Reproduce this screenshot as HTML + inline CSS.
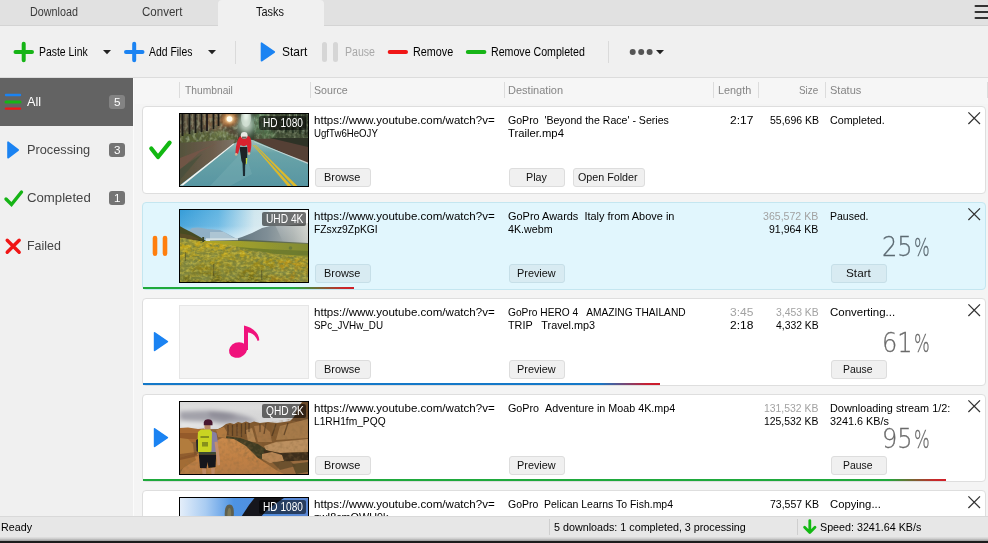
<!DOCTYPE html>
<html><head><meta charset="utf-8"><title>Tasks</title>
<style>
*{box-sizing:border-box;margin:0;padding:0}
html,body{width:988px;height:543px;overflow:hidden;background:#f0f0f0;font-family:"Liberation Sans",sans-serif;font-size:11.5px;color:#000}
.abs{position:absolute}
.t{position:absolute;white-space:pre;transform-origin:0 0;color:#000}
#tabs{left:0;top:0;width:988px;height:26px;background:#e1e1e1;border-bottom:1px solid #d4d4d4}
#tabact{left:218px;top:0;width:106px;height:26px;background:#f0f0f0;border-radius:4px 4px 0 0}
#toolbar{left:0;top:26px;width:988px;height:52px;background:#f0f0f0;border-bottom:1px solid #dcdcdc}
.sep{position:absolute;width:1px;background:#dadada}
#side{left:0;top:78px;width:133px;height:438px;background:#f0f0f0}
.bd{position:absolute;left:109px;width:16px;height:14px;border-radius:3px;background:#747474}
#main{left:133px;top:78px;width:855px;height:438px;background:#f4f4f4;border-left:1.5px solid #fbfbfb}
#hdr{left:135px;top:78px;width:853px;height:26px;background:#f6f6f6}
.card{position:absolute;left:142px;width:844px;height:88px;background:#fff;border:1px solid #dedede;border-radius:4px;overflow:hidden}
.card.sel{background:#e1f6fd;border-color:#c4e6f0}
.btn{position:absolute;height:19px;border:1px solid #dddddd;border-radius:3px;background:#f0f0f0}
.btn.s{background:#d8ebf2;border-color:#c6dfe8}
.th{position:absolute;left:179px;width:130px;height:74px;border:1px solid #000;overflow:hidden;background:#888}
.th svg{position:absolute;left:0;top:0;display:block}
.q{position:absolute;height:14px;border-radius:2px;background:rgba(0,0,0,.55)}
.pb{position:absolute;left:143px;height:2.5px}
#status{left:0;top:516px;width:988px;height:22px;background:#e7e7e7;border-top:1px solid #d9d9d9}
#bot1{left:0;top:537px;width:988px;height:4px;background:linear-gradient(#e2e2e2,#cfcfcf 40%,#9a9a9a)}
#bot2{left:0;top:540.5px;width:988px;height:3px;background:#1c1c1c}
</style></head><body>
<div id="tabs" class="abs"></div><div id="tabact" class="abs"></div>
<div class="t" style="left:30.00px;top:5.14px;font-size:12px;line-height:14px;transform:scaleX(0.8974);color:#3a3a3a;">Download</div><div class="t" style="left:142.00px;top:5.14px;font-size:12px;line-height:14px;transform:scaleX(0.9612);color:#3a3a3a;">Convert</div><div class="t" style="left:256.00px;top:5.14px;font-size:12px;line-height:14px;transform:scaleX(0.9092);color:#111;">Tasks</div><svg class="abs" style="left:970px;top:0" width="18" height="25"><path d="M5.6 6H20M5.6 12H20M5.6 18H20" stroke="#333" stroke-width="2.2" stroke-linecap="round"/></svg>
<div id="toolbar" class="abs"></div>
<svg class="abs" style="left:0;top:26px" width="988" height="52">
<g fill="none" stroke-linecap="round">
<path d="M15.5 26H32M23.7 17.8V34.2" stroke="#16b416" stroke-width="4"/>
<path d="M126 26H142.5M134.2 17.8V34.2" stroke="#1b83f2" stroke-width="4"/>
<path d="M324.5 18.5V33.5M335.5 18.5V33.5" stroke="#d6d6d6" stroke-width="5"/>
<path d="M389.7 26H406" stroke="#f01616" stroke-width="4"/>
<path d="M467.8 26H484.4" stroke="#16b416" stroke-width="4"/>
</g>
<path d="M261.5 17.2V34.8L274.3 26Z" fill="#1b83f2" stroke="#1b83f2" stroke-width="1.6" stroke-linejoin="round"/>
<path d="M103 24H111L107 28.3Z" fill="#222"/>
<path d="M208 24H216L212 28.3Z" fill="#222"/>
<path d="M656 24H664L660 28.3Z" fill="#222"/>
<circle cx="632.7" cy="26" r="3" fill="#555"/><circle cx="641.2" cy="26" r="3" fill="#555"/><circle cx="649.6" cy="26" r="3" fill="#555"/>
</svg>
<div class="sep" style="left:235px;top:41px;height:23px"></div>
<div class="sep" style="left:608px;top:41px;height:22px"></div>
<div class="t" style="left:39.10px;top:45.04px;font-size:12px;line-height:14px;transform:scaleX(0.8689);">Paste Link</div><div class="t" style="left:149.40px;top:45.04px;font-size:12px;line-height:14px;transform:scaleX(0.8675);">Add Files</div><div class="t" style="left:282.00px;top:45.04px;font-size:12px;line-height:14px;transform:scaleX(0.9943);">Start</div><div class="t" style="left:344.70px;top:45.04px;font-size:12px;line-height:14px;transform:scaleX(0.8815);color:#a9a9a9;">Pause</div><div class="t" style="left:412.70px;top:45.04px;font-size:12px;line-height:14px;transform:scaleX(0.8996);">Remove</div><div class="t" style="left:490.80px;top:45.04px;font-size:12px;line-height:14px;transform:scaleX(0.8853);">Remove Completed</div><div id="side" class="abs"></div>
<div class="abs" style="left:0;top:78px;width:133px;height:48px;background:#636363"></div>
<svg class="abs" style="left:0;top:78px" width="30" height="200">
<g fill="none" stroke-linecap="round">
<path d="M6 17H20" stroke="#1b83f2" stroke-width="2.4"/>
<path d="M6 24H20" stroke="#16b416" stroke-width="3"/>
<path d="M6 30.6H20" stroke="#f01616" stroke-width="2.4"/>
<path d="M6 121L11.5 126.5L21.5 114" stroke="#16b416" stroke-width="3.4" stroke-linejoin="miter"/>
<path d="M7.2 162.2L19.2 174.2M19.2 162.2L7.2 174.2" stroke="#f01616" stroke-width="3.4"/>
</g>
<path d="M8 64.2V79.8L18.2 72Z" fill="#1b83f2" stroke="#1b83f2" stroke-width="1.6" stroke-linejoin="round"/>
</svg>
<div class="t" style="left:26.80px;top:94.10px;font-size:13px;line-height:16px;transform:scaleX(0.9756);color:#fff;">All</div><div class="t" style="left:26.80px;top:142.20px;font-size:13px;line-height:16px;transform:scaleX(0.9811);color:#444;">Processing</div><div class="t" style="left:26.80px;top:190.20px;font-size:13px;line-height:16px;transform:scaleX(1.0147);color:#444;">Completed</div><div class="t" style="left:27.00px;top:238.20px;font-size:13px;line-height:16px;transform:scaleX(0.9542);color:#444;">Failed</div><div class="bd" style="top:95px;background:#838383"></div><div class="t" style="left:113.50px;top:95.76px;font-size:10.5px;line-height:13px;transform:scaleX(1.1123);color:#fff;">5</div><div class="bd" style="top:143px"></div><div class="t" style="left:113.50px;top:143.76px;font-size:10.5px;line-height:13px;transform:scaleX(1.1123);color:#fff;">3</div><div class="bd" style="top:191px"></div><div class="t" style="left:113.50px;top:191.76px;font-size:10.5px;line-height:13px;transform:scaleX(1.1123);color:#fff;">1</div><div id="main" class="abs"></div><div id="hdr" class="abs"></div>
<div class="sep" style="left:179.0px;top:82px;height:16px;background:#dcdcdc"></div><div class="sep" style="left:309.5px;top:82px;height:16px;background:#dcdcdc"></div><div class="sep" style="left:503.5px;top:82px;height:16px;background:#dcdcdc"></div><div class="sep" style="left:712.5px;top:82px;height:16px;background:#dcdcdc"></div><div class="sep" style="left:758.3px;top:82px;height:16px;background:#dcdcdc"></div><div class="sep" style="left:825.4px;top:82px;height:16px;background:#dcdcdc"></div><div class="sep" style="left:986.5px;top:82px;height:16px;background:#dcdcdc"></div><div class="t" style="left:184.50px;top:82.82px;font-size:11.5px;line-height:14px;transform:scaleX(0.8919);color:#858585;">Thumbnail</div><div class="t" style="left:314.00px;top:82.82px;font-size:11.5px;line-height:14px;transform:scaleX(0.9249);color:#858585;">Source</div><div class="t" style="left:508.00px;top:82.82px;font-size:11.5px;line-height:14px;transform:scaleX(0.9575);color:#858585;">Destination</div><div class="t" style="left:718.20px;top:82.82px;font-size:11.5px;line-height:14px;transform:scaleX(0.9435);color:#858585;">Length</div><div class="t" style="left:799.20px;top:82.82px;font-size:11.5px;line-height:14px;transform:scaleX(0.8581);color:#858585;">Size</div><div class="t" style="left:830.10px;top:82.82px;font-size:11.5px;line-height:14px;transform:scaleX(0.9598);color:#858585;">Status</div><div class="card" style="top:106px"></div>
<div class="t" style="left:314.00px;top:113.22px;font-size:11.5px;line-height:14px;transform:scaleX(1.0042);">https://www.youtube.com/watch?v=</div><div class="t" style="left:314.00px;top:126.02px;font-size:11.5px;line-height:14px;transform:scaleX(0.8401);">UgfTw6HeOJY</div><div class="t" style="left:508.00px;top:113.22px;font-size:11.5px;line-height:14px;transform:scaleX(0.9185);">GoPro &nbsp;&#x27;Beyond the Race&#x27; - Series</div><div class="t" style="left:508.00px;top:126.02px;font-size:11.5px;line-height:14px;transform:scaleX(0.9791);">Trailer.mp4</div><svg class="abs" style="left:966px;top:110px" width="16" height="16"><path d="M2.4 2.4L14 14M14 2.4L2.4 14" stroke="#333" stroke-width="1.25" fill="none"/></svg>
<div class="t" style="left:729.50px;top:113.22px;font-size:11.5px;line-height:14px;transform:scaleX(1.0451);">2:17</div><div class="t" style="left:769.50px;top:113.22px;font-size:11.5px;line-height:14px;transform:scaleX(0.9140);">55,696 KB</div><div class="t" style="left:830.10px;top:113.22px;font-size:11.5px;line-height:14px;transform:scaleX(0.9318);">Completed.</div><div class="btn" style="left:315px;top:168px;width:56px"></div><div class="t" style="left:323.50px;top:170.22px;font-size:11.5px;line-height:14px;transform:scaleX(0.9489);color:#111;">Browse</div><div class="btn" style="left:509px;top:168px;width:56px"></div><div class="t" style="left:526.00px;top:170.22px;font-size:11.5px;line-height:14px;transform:scaleX(0.9341);color:#111;">Play</div><div class="btn" style="left:573px;top:168px;width:72px"></div><div class="t" style="left:578.30px;top:170.22px;font-size:11.5px;line-height:14px;transform:scaleX(0.9322);color:#111;">Open Folder</div><svg class="abs" style="left:143px;top:127px" width="36" height="40"><path d="M8.3 21.5L15 30L26.6 15.6" fill="none" stroke="#12b812" stroke-width="4.2" stroke-linecap="round" stroke-linejoin="round"/></svg>
<div class="th" style="top:113px"><svg width="128" height="72" viewBox="0 0 128 72">
<defs>
<linearGradient id="a0" x1="0" y1="0" x2="0" y2="1"><stop offset="0" stop-color="#a3c3bd"/><stop offset=".3" stop-color="#69a3a8"/><stop offset="1" stop-color="#5896a2"/></linearGradient>
<radialGradient id="a1"><stop offset="0" stop-color="#fffbe6"/><stop offset=".25" stop-color="#ffd9a0" stop-opacity=".95"/><stop offset=".6" stop-color="#c9783a" stop-opacity=".55"/><stop offset="1" stop-color="#7a4a2a" stop-opacity="0"/></radialGradient>
<radialGradient id="a2"><stop offset="0" stop-color="#f4faf4"/><stop offset=".4" stop-color="#b9d6c4" stop-opacity=".9"/><stop offset="1" stop-color="#5f8a6c" stop-opacity="0"/></radialGradient>
<linearGradient id="a3" x1="0" y1="0" x2="1" y2="0"><stop offset="0" stop-color="#55523c"/><stop offset=".6" stop-color="#6d5d4d"/><stop offset="1" stop-color="#7d7466"/></linearGradient>
<filter id="af" x="-10%" y="-10%" width="120%" height="120%"><feGaussianBlur stdDeviation=".7"/></filter>
<filter id="ag" x="-10%" y="-10%" width="120%" height="120%"><feGaussianBlur stdDeviation="1.6"/></filter>
<filter id="an" x="0" y="0" width="100%" height="100%"><feTurbulence type="fractalNoise" baseFrequency=".35 .18" numOctaves="2" seed="4"/><feColorMatrix values="0 0 0 0 .08  0 0 0 0 .1  0 0 0 0 .05  2.6 0 0 0 -1.05"/><feComposite in2="SourceGraphic" operator="in"/></filter>
<filter id="ao" x="0" y="0" width="100%" height="100%"><feTurbulence type="fractalNoise" baseFrequency=".3 .25" numOctaves="2" seed="9"/><feColorMatrix values="0 0 0 0 .62  0 0 0 0 .74  0 0 0 0 .5  0 2.4 0 0 -1.05"/><feComposite in2="SourceGraphic" operator="in"/></filter>
</defs>
<rect width="128" height="72" fill="#3b3a2b"/>
<g filter="url(#ag)">
<rect x="-4" y="-4" width="62" height="34" fill="#574838"/>
<ellipse cx="36" cy="6" rx="14" ry="10" fill="#8a6848" opacity=".7"/>
<rect x="70" y="-4" width="62" height="34" fill="#34412f"/>
<ellipse cx="82" cy="10" rx="9" ry="12" fill="#5f8a62" opacity=".7"/>
<ellipse cx="66" cy="10" rx="13" ry="16" fill="url(#a2)" opacity=".85"/>
<ellipse cx="66" cy="1" rx="3.2" ry="6" fill="#f6fbf6"/>
<path d="M0 20C14 16 34 17 56 22V30H0Z" fill="#596036"/>
<path d="M74 21C90 17 110 18 128 22V30H74Z" fill="#3c4a30"/>
<ellipse cx="40" cy="20" rx="9" ry="3.5" fill="#6e7a4a"/>
<ellipse cx="88" cy="21" rx="8" ry="3.5" fill="#4e6a44"/>
</g>
<path d="M0 0H58V28L0 30ZM74 0H128V26H74Z" filter="url(#an)" opacity=".75"/>
<path d="M0 0H58V28L0 30ZM74 0H128V26H74Z" filter="url(#ao)" opacity=".45"/>
<g filter="url(#af)"><ellipse cx="49.5" cy="5" rx="11" ry="10" fill="url(#a1)"/><circle cx="49.5" cy="5" r="2.8" fill="#fffdf0"/><ellipse cx="66" cy="4" rx="5" ry="9" fill="#dfeee2" opacity=".55"/></g>
<g filter="url(#af)">
<g stroke="#1f1b15" stroke-width="1.8"><path d="M2.5 0V22M9.5 0V20M15.5 0V19M21.5 0V18M27 0V17M33.5 0V15M38.5 0V12"/></g>
<g stroke="#8a8468" stroke-width="1.2" opacity=".7"><path d="M6 0V14M12.5 0V13M18.5 0V12M24.5 0V11"/></g>
<g stroke="#1f2a1c" stroke-width="1.6" opacity=".8"><path d="M106 0V18M113 0V19M120 0V20M125.5 0V21"/></g>
<g stroke="#8fa890" stroke-width="1" opacity=".6"><path d="M109.5 0V10M116.5 0V12M123 14V20"/></g>
<path d="M0 29L55 25.5L53 30L0 71Z" fill="url(#a3)"/>
<path d="M0 44L36 30L20 38L0 56Z" fill="#7a5648" opacity=".7"/>
<path d="M0 55L22 40L0 66Z" fill="#47503c" opacity=".7"/>
<path d="M72.5 25L128 24V50Z" fill="#553f36"/>
<path d="M90 24H128V33Z" fill="#2f3326"/>
<path d="M54 29.5L64 25L73 26L128 49.5V72H0V71Z" fill="url(#a0)"/>
<path d="M64 36L72 60L50 72H30Z" fill="#7fb2b8" opacity=".35"/>
<path d="M53.3 29.6L54.6 29.8L3 71.6L0 71.4Z" fill="#f2f2ee"/>
<path d="M74 27.5L128 48.4V50L74 28Z" fill="#d6e2e0" opacity=".85"/>
<path d="M72.8 31L73.8 31L111.5 72H107.6Z" fill="#dcb82c"/>
<path d="M74.6 31L75.6 31L117.5 72H113.4Z" fill="#dcb82c"/>
<path d="M62 36L65.5 36L65 62L63 62Z" fill="#1e2a30"/>
<path d="M59.5 33H67.5L67 47L64.5 52L61.5 47Z" fill="#1b2226"/>
<path d="M60 22.5C62 21 67 21 69.5 22.5C72 25 71.8 33 70.2 38.5L68 39L67 31C65 32.5 62.5 32.5 60.5 31L58 40L55.5 39.6C55.6 33 57 25.5 60 22.5Z" fill="#d9232e"/>
<circle cx="64.2" cy="21.3" r="3.4" fill="#e9e9e4"/>
<path d="M62 22.6H66.6V24.6H62Z" fill="#6c6258"/>
<circle cx="56.2" cy="40.4" r="1.3" fill="#d8b090"/><circle cx="69" cy="39.6" r="1.3" fill="#d8b090"/>
<path d="M65.8 44L67.4 44L66.8 50L65.8 50Z" fill="#c8e040"/>
</g>
</svg></div><div class="q" style="left:258.5px;top:116px;width:47.5px"></div><div class="t" style="left:262.50px;top:116.04px;font-size:12px;line-height:14px;transform:scaleX(0.8422);color:#fff;">HD 1080</div>
<div class="card sel" style="top:202px"></div>
<div class="t" style="left:314.00px;top:209.22px;font-size:11.5px;line-height:14px;transform:scaleX(1.0042);">https://www.youtube.com/watch?v=</div><div class="t" style="left:314.00px;top:222.02px;font-size:11.5px;line-height:14px;transform:scaleX(0.8980);">FZsxz9ZpKGI</div><div class="t" style="left:508.00px;top:209.22px;font-size:11.5px;line-height:14px;transform:scaleX(0.9512);">GoPro Awards &nbsp;Italy from Above in</div><div class="t" style="left:508.00px;top:222.02px;font-size:11.5px;line-height:14px;transform:scaleX(0.9304);">4K.webm</div><svg class="abs" style="left:966px;top:206px" width="16" height="16"><path d="M2.4 2.4L14 14M14 2.4L2.4 14" stroke="#333" stroke-width="1.25" fill="none"/></svg>
<div class="t" style="left:763.30px;top:209.22px;font-size:11.5px;line-height:14px;transform:scaleX(0.9200);color:#a2a2a2;">365,572 KB</div><div class="t" style="left:769.40px;top:222.02px;font-size:11.5px;line-height:14px;transform:scaleX(0.9159);">91,964 KB</div><div class="t" style="left:830.10px;top:209.22px;font-size:11.5px;line-height:14px;transform:scaleX(0.9123);">Paused.</div><div class="btn s" style="left:315px;top:264px;width:56px"></div><div class="t" style="left:323.50px;top:266.22px;font-size:11.5px;line-height:14px;transform:scaleX(0.9489);color:#111;">Browse</div><div class="btn s" style="left:509px;top:264px;width:56px"></div><div class="t" style="left:516.70px;top:266.22px;font-size:11.5px;line-height:14px;transform:scaleX(0.9461);color:#111;">Preview</div><div class="btn s" style="left:831px;top:264px;width:56px"></div><div class="t" style="left:846.00px;top:266.22px;font-size:11.5px;line-height:14px;transform:scaleX(1.0248);color:#111;">Start</div><svg class="abs" style="left:143px;top:223px" width="36" height="40"><path d="M12 15V30.6M22 15V30.6" fill="none" stroke="#ff7f0e" stroke-width="4.6" stroke-linecap="round"/></svg>
<div class="th" style="top:209px"><svg width="128" height="72" viewBox="0 0 128 72">
<defs>
<linearGradient id="b0" x1="0" y1="0" x2="1" y2="0"><stop offset="0" stop-color="#379dd8"/><stop offset=".3" stop-color="#63b5e2"/><stop offset=".58" stop-color="#cfe6ee"/><stop offset="1" stop-color="#f6f7f4"/></linearGradient>
<linearGradient id="b1" x1="0" y1="0" x2="0" y2="1"><stop offset="0" stop-color="#ffffff" stop-opacity="0"/><stop offset=".5" stop-color="#ffffff" stop-opacity=".1"/><stop offset="1" stop-color="#e8f2f4" stop-opacity=".8"/></linearGradient>
<linearGradient id="b2" x1="0" y1="0" x2="0" y2="1"><stop offset="0" stop-color="#c9a91e"/><stop offset=".4" stop-color="#b09a1c"/><stop offset="1" stop-color="#5e5c18"/></linearGradient>
<linearGradient id="b3" x1="0" y1="0" x2="1" y2="0"><stop offset="0" stop-color="#60747f"/><stop offset=".45" stop-color="#7f8e96"/><stop offset=".8" stop-color="#a9b0ae"/><stop offset="1" stop-color="#c9ccc6"/></linearGradient>
<linearGradient id="b4" x1="0" y1="0" x2="1" y2="0"><stop offset="0" stop-color="#b0a626"/><stop offset=".5" stop-color="#9a9c2e"/><stop offset="1" stop-color="#818a32"/></linearGradient>
<linearGradient id="b5" x1="0" y1="0" x2="0" y2="1"><stop offset="0" stop-color="#ffffff" stop-opacity=".55"/><stop offset="1" stop-color="#ffffff" stop-opacity="0"/></linearGradient>
<filter id="bf" x="-10%" y="-10%" width="120%" height="120%"><feGaussianBlur stdDeviation=".7"/></filter>
<filter id="bn" x="0" y="0" width="100%" height="100%"><feTurbulence type="fractalNoise" baseFrequency=".2 .28" numOctaves="2" seed="7"/><feColorMatrix values="0 0 0 0 .2  0 0 0 0 .22  0 0 0 0 .04  3.6 0 0 0 -1.42"/><feComposite in2="SourceGraphic" operator="in"/></filter>
<filter id="bm" x="0" y="0" width="100%" height="100%"><feTurbulence type="fractalNoise" baseFrequency=".3 .4" numOctaves="2" seed="3"/><feColorMatrix values="0 0 0 0 .95  0 0 0 0 .76  0 0 0 0 .08  0 2 0 0 -.8"/><feComposite in2="SourceGraphic" operator="in"/></filter>
<filter id="bo" x="0" y="0" width="100%" height="100%"><feTurbulence type="fractalNoise" baseFrequency=".06 .1" numOctaves="2" seed="11"/><feColorMatrix values="0 0 0 0 .22  0 0 0 0 .25  0 0 0 0 .06  0 0 3.2 0 -1.35"/><feComposite in2="SourceGraphic" operator="in"/></filter>
</defs>
<rect width="128" height="72" fill="url(#b0)"/>
<rect width="128" height="32" fill="url(#b1)"/>
<g filter="url(#bf)">
<path d="M6 23L12 18L18 17.5L28 19L40 20L46 23L58 29.5H6Z" fill="#90b0c6"/>
<path d="M30 22L44 22L52 27L58 29.5H30Z" fill="#b4cad6" opacity=".8"/>
<path d="M54 29.5L62 27L72 23L82 18L90 16L104 16L128 13V40H54Z" fill="url(#b3)"/>
<path d="M88 0H128V34H104Z" fill="url(#b5)" opacity=".7"/>
<path d="M26 28.3H58V31.2H26Z" fill="#d3e0e3"/>
<path d="M30 30.4L66 29.8L128 33V35L30 32Z" fill="#4f5a34" opacity=".75"/>
<path d="M-2 15L4 18.5L12 22.5L20 27L27 31.5L-2 34Z" fill="#474c22"/>
<path d="M-2 23L10 25L20 29L-2 33Z" fill="#6a4e2a" opacity=".55"/>
<path d="M20 31L60 31L128 34V52H20Z" fill="url(#b4)"/>
<path d="M-2 27.5L28 32.5L50 35L70 40L100 44.5L128 47V74H-2Z" fill="url(#b2)"/>
<path d="M56 36.5C76 39 100 40 128 41V45.5C100 44.5 76 43.5 56 38.5Z" fill="#66742c" opacity=".75"/>
<path d="M96 52L128 48V74H86Z" fill="#c9961c" opacity=".45"/>
<circle cx="110.5" cy="38" r="1.8" fill="#6a7a3a"/>
</g>
<path d="M-2 27.5L28 32.5L50 35L70 40L100 44.5L128 47V74H-2Z" filter="url(#bo)"/>
<path d="M-2 27.5L28 32.5L50 35L70 40L100 44.5L128 47V74H-2Z" filter="url(#bn)"/>
<path d="M-2 27.5L28 32.5L50 35L70 40L100 44.5L128 47V74H-2Z" filter="url(#bm)" opacity=".5"/>
<rect x="22.3" y="27" width="1.8" height="5" fill="#3a4424"/>
<g fill="#3c3a1c" opacity=".4"><rect x="33" y="54" width="1.2" height="12"/><rect x="81" y="60" width="1.2" height="10"/><rect x="5" y="42" width="1.1" height="9"/></g>
</svg></div><div class="q" style="left:262.0px;top:212px;width:44.0px"></div><div class="t" style="left:265.50px;top:212.04px;font-size:12px;line-height:14px;transform:scaleX(0.8497);color:#fff;">UHD 4K</div>
<div class="t" style="left:881.80px;top:230.32px;font-size:27.4px;line-height:33px;transform:scaleX(0.8778);color:#5c6a72;font-weight:200;-webkit-text-stroke:.3px;font-family:'DejaVu Sans',sans-serif;">25</div><div class="t" style="left:913.70px;top:233.32px;font-size:24.5px;line-height:29px;transform:scaleX(0.6744);color:#5c6a72;font-weight:200;-webkit-text-stroke:.3px;font-family:'DejaVu Sans',sans-serif;">%</div><div class="pb" style="top:286.5px;width:210.5px;background:linear-gradient(90deg,#1fa93c 0,#1fa93c 150px,#c8282a 200px,#d01f28 100%)"></div>
<div class="card" style="top:298px"></div>
<div class="t" style="left:314.00px;top:305.22px;font-size:11.5px;line-height:14px;transform:scaleX(1.0042);">https://www.youtube.com/watch?v=</div><div class="t" style="left:314.00px;top:318.02px;font-size:11.5px;line-height:14px;transform:scaleX(0.8568);">SPc_JVHw_DU</div><div class="t" style="left:508.00px;top:305.22px;font-size:11.5px;line-height:14px;transform:scaleX(0.8860);">GoPro HERO 4 &nbsp; AMAZING THAILAND</div><div class="t" style="left:508.00px;top:318.02px;font-size:11.5px;line-height:14px;transform:scaleX(0.9419);">TRIP &nbsp; Travel.mp3</div><svg class="abs" style="left:966px;top:302px" width="16" height="16"><path d="M2.4 2.4L14 14M14 2.4L2.4 14" stroke="#333" stroke-width="1.25" fill="none"/></svg>
<div class="t" style="left:729.50px;top:305.22px;font-size:11.5px;line-height:14px;transform:scaleX(1.0451);color:#a2a2a2;">3:45</div><div class="t" style="left:729.50px;top:318.02px;font-size:11.5px;line-height:14px;transform:scaleX(1.0451);">2:18</div><div class="t" style="left:775.90px;top:305.22px;font-size:11.5px;line-height:14px;transform:scaleX(0.9022);color:#a2a2a2;">3,453 KB</div><div class="t" style="left:775.90px;top:318.02px;font-size:11.5px;line-height:14px;transform:scaleX(0.9022);">4,332 KB</div><div class="t" style="left:830.10px;top:305.22px;font-size:11.5px;line-height:14px;transform:scaleX(0.9984);">Converting...</div><div class="btn" style="left:315px;top:360px;width:56px"></div><div class="t" style="left:323.50px;top:362.22px;font-size:11.5px;line-height:14px;transform:scaleX(0.9489);color:#111;">Browse</div><div class="btn" style="left:509px;top:360px;width:56px"></div><div class="t" style="left:516.70px;top:362.22px;font-size:11.5px;line-height:14px;transform:scaleX(0.9461);color:#111;">Preview</div><div class="btn" style="left:831px;top:360px;width:56px"></div><div class="t" style="left:842.90px;top:362.22px;font-size:11.5px;line-height:14px;transform:scaleX(0.9046);color:#111;">Pause</div><svg class="abs" style="left:143px;top:319px" width="36" height="40"><path d="M11.6 13.8V31.4L24.4 22.6Z" fill="#1b83f2" stroke="#1b83f2" stroke-width="1.6" stroke-linejoin="round"/></svg>
<div class="abs" style="left:179px;top:305px;width:130px;height:74px;background:#f4f4f4;border:1px solid #e6e6e6"></div><svg class="abs" style="left:179px;top:305px" width="130" height="74"><g fill="#f0127c"><ellipse cx="59" cy="45" rx="9.2" ry="7.6" transform="rotate(-20 59 45)"/><path d="M65 20.5C72 22 80 27 80.3 35.2L78.6 36C77 31 73.5 28.3 69 27.6V45H65Z"/></g></svg>
<div class="t" style="left:881.80px;top:326.32px;font-size:27.4px;line-height:33px;transform:scaleX(0.8778);color:#6a6a6a;font-weight:200;-webkit-text-stroke:.3px;font-family:'DejaVu Sans',sans-serif;">61</div><div class="t" style="left:913.70px;top:329.32px;font-size:24.5px;line-height:29px;transform:scaleX(0.6744);color:#6a6a6a;font-weight:200;-webkit-text-stroke:.3px;font-family:'DejaVu Sans',sans-serif;">%</div><div class="pb" style="top:382.5px;width:516.5px;background:linear-gradient(90deg,#1478c8 0,#1478c8 456px,#c81e32 504px,#cc1a28 100%)"></div>
<div class="card" style="top:394px"></div>
<div class="t" style="left:314.00px;top:401.22px;font-size:11.5px;line-height:14px;transform:scaleX(1.0042);">https://www.youtube.com/watch?v=</div><div class="t" style="left:314.00px;top:414.02px;font-size:11.5px;line-height:14px;transform:scaleX(0.8891);">L1RH1fm_PQQ</div><div class="t" style="left:508.00px;top:401.22px;font-size:11.5px;line-height:14px;transform:scaleX(0.9341);">GoPro &nbsp;Adventure in Moab 4K.mp4</div><svg class="abs" style="left:966px;top:398px" width="16" height="16"><path d="M2.4 2.4L14 14M14 2.4L2.4 14" stroke="#333" stroke-width="1.25" fill="none"/></svg>
<div class="t" style="left:764.20px;top:401.22px;font-size:11.5px;line-height:14px;transform:scaleX(0.9050);color:#a2a2a2;">131,532 KB</div><div class="t" style="left:764.20px;top:414.02px;font-size:11.5px;line-height:14px;transform:scaleX(0.9050);">125,532 KB</div><div class="t" style="left:830.10px;top:401.22px;font-size:11.5px;line-height:14px;transform:scaleX(0.9456);">Downloading stream 1/2:</div><div class="t" style="left:830.10px;top:414.02px;font-size:11.5px;line-height:14px;transform:scaleX(0.9400);">3241.6 KB/s</div><div class="btn" style="left:315px;top:456px;width:56px"></div><div class="t" style="left:323.50px;top:458.22px;font-size:11.5px;line-height:14px;transform:scaleX(0.9489);color:#111;">Browse</div><div class="btn" style="left:509px;top:456px;width:56px"></div><div class="t" style="left:516.70px;top:458.22px;font-size:11.5px;line-height:14px;transform:scaleX(0.9461);color:#111;">Preview</div><div class="btn" style="left:831px;top:456px;width:56px"></div><div class="t" style="left:842.90px;top:458.22px;font-size:11.5px;line-height:14px;transform:scaleX(0.9046);color:#111;">Pause</div><svg class="abs" style="left:143px;top:415px" width="36" height="40"><path d="M11.6 13.8V31.4L24.4 22.6Z" fill="#1b83f2" stroke="#1b83f2" stroke-width="1.6" stroke-linejoin="round"/></svg>
<div class="th" style="top:401px"><svg width="128" height="72" viewBox="0 0 128 72">
<defs>
<linearGradient id="c0" x1="0" y1="0" x2="0" y2="1"><stop offset="0" stop-color="#d9d9d9"/><stop offset="1" stop-color="#cfcfd2"/></linearGradient>
<linearGradient id="c1" x1="0" y1="0" x2="0" y2="1"><stop offset="0" stop-color="#c98a4c"/><stop offset=".6" stop-color="#c08044"/><stop offset="1" stop-color="#b47a44"/></linearGradient>
<filter id="cf" x="-10%" y="-10%" width="120%" height="120%"><feGaussianBlur stdDeviation=".7"/></filter>
<filter id="cg" x="-10%" y="-10%" width="120%" height="120%"><feGaussianBlur stdDeviation="2"/></filter>
<filter id="cn" x="0" y="0" width="100%" height="100%"><feTurbulence type="fractalNoise" baseFrequency=".25" numOctaves="2" seed="5"/><feColorMatrix values="0 0 0 0 .25  0 0 0 0 .14  0 0 0 0 .05  1.6 0 0 0 -.66"/><feComposite in2="SourceGraphic" operator="in"/></filter>
</defs>
<rect width="128" height="72" fill="url(#c0)"/>
<rect y="27" width="128" height="45" fill="#8a6034"/>
<g filter="url(#cg)">
<path d="M0 9C20 7 40 8 54 11C64 13 72 16 78 20L40 22L10 20L0 18Z" fill="#a3a2aa"/>
<path d="M0 19L30 20L50 24L0 27Z" fill="#e6e6e6"/>
<path d="M28 9C38 8 48 10 58 15L44 18L30 15Z" fill="#8f8d98"/><path d="M0 3H128V8L60 7L0 9Z" fill="#e0e0e0"/>
</g>
<g filter="url(#cf)">
<path d="M0 26L8 25.5L18 27L24 26.5V40H0Z" fill="#a86a30"/>
<path d="M0 31H22V37H0Z" fill="#8c5426" opacity=".7"/>
<path d="M36 28L42 25L46 22L50 21L54 22L58 20L62 21L66 19.5L70 21L74 19.5L80 21L88 20L96 21L104 20L110 19L114 15L118 6L122 0H128V60H70L50 40L36 34Z" fill="#80582f"/>
<path d="M111 19L115 14L119 5L123 0H128V20Z" fill="#6d4c2a"/>
<path d="M100 24L128 17V36L96 38Z" fill="#a67a48"/>
<path d="M74 24L82 23L90 30L92 40L78 40Z" fill="#a47444"/>
<path d="M66 28L72 26L76 40H68Z" fill="#b08250"/>
<g stroke="#3e2a18" stroke-width="1.3" opacity=".6"><path d="M48 23V33M52.5 23V34M57 22V34M61.5 22V35M65.5 21V32M69 21V30M80 22V30M86 21L84 32M96 22L92 34M108 21L104 33"/></g>
<path d="M44 34L60 36L78 42L90 50L84 58L60 50Z" fill="#3d3a20"/>
<path d="M36 28L44 25L47 30L46 36L38 35Z" fill="#b27a40"/>
<path d="M84 44L96 40L128 37V50L100 51L86 48Z" fill="#bc9060"/>
<path d="M84 48L100 51L128 50V59L104 61L84 55Z" fill="#3c2e1a"/>
<path d="M82 52L92 50L102 53L104 59L90 61L82 57Z" fill="#b88654"/>
<path d="M100 60L128 58V72H96Z" fill="#9a6c40"/><path d="M112 62L128 60V70L116 72Z" fill="#4a4024" opacity=".7"/>
<path d="M92 60L110 59L116 64L100 68Z" fill="#5a4628" opacity=".7"/>
<path d="M0 72L6 60L20 50L34 40L42 36L54 37L66 44L78 56L96 68L104 72Z" fill="url(#c1)"/>
<path d="M0 36L8 37L13 42L14 52L0 56Z" fill="#b27c3e"/>
<path d="M0 56L14 52L16 58L0 68Z" fill="#a26c34"/>
<path d="M0 52L16 50L18 54L0 58Z" fill="#7a4a24" opacity=".6"/>
</g>
<path d="M0 72L6 60L20 50L34 40L42 36L54 37L66 44L78 56L96 68L104 72Z" filter="url(#cn)" opacity=".5"/>
<path d="M36 28L128 14V60H70Z" filter="url(#cn)" opacity=".55"/>
<g filter="url(#cf)">
<path d="M24.5 23H30.5V29H24.5Z" fill="#b88868"/>
<path d="M23.8 20.5C23.8 16 32.5 16 32.5 20.5V23.2H23.8Z" fill="#47182e"/>
<path d="M29 28L36.5 31L37.8 40L36 50H28Z" fill="#867fa0"/>
<path d="M18 30L21 27.5H30L32 30L31.5 49L29 51H19L17 48Z" fill="#c9d422"/>
<path d="M20.5 34H29V36H20.5ZM22 40H28V44.5H22Z" fill="#6f7a1a" opacity=".75"/>
<path d="M16 38L18 37V50L16.5 49Z" fill="#2a2a2a"/>
<path d="M18.5 50H36.5L36 52.5H19Z" fill="#3e4a34"/>
<path d="M18.8 52.5H36.2L35.5 65L28.5 66L27.5 60L26.5 66.5L20 66Z" fill="#17171a"/>
<path d="M34.5 40L37.5 39.5L39.8 56L40 63L37.6 63.5L36.6 56Z" fill="#c58f6c"/>
<path d="M22 66.5H26V72H22.5ZM31 66H35L34.5 72H31.5Z" fill="#bf8a66"/>
</g>
</svg></div><div class="q" style="left:262.0px;top:404px;width:44.0px"></div><div class="t" style="left:265.50px;top:404.04px;font-size:12px;line-height:14px;transform:scaleX(0.8481);color:#fff;">QHD 2K</div>
<div class="t" style="left:881.80px;top:422.32px;font-size:27.4px;line-height:33px;transform:scaleX(0.8778);color:#6a6a6a;font-weight:200;-webkit-text-stroke:.3px;font-family:'DejaVu Sans',sans-serif;">95</div><div class="t" style="left:913.70px;top:425.32px;font-size:24.5px;line-height:29px;transform:scaleX(0.6744);color:#6a6a6a;font-weight:200;-webkit-text-stroke:.3px;font-family:'DejaVu Sans',sans-serif;">%</div><div class="pb" style="top:478.5px;width:803px;background:linear-gradient(90deg,#1fa93c 0,#1fa93c 745px,#c8282a 792px,#d01f28 100%)"></div>
<div class="card" style="top:490px"></div>
<div class="t" style="left:314.00px;top:497.22px;font-size:11.5px;line-height:14px;transform:scaleX(1.0042);">https://www.youtube.com/watch?v=</div><div class="t" style="left:314.00px;top:510.02px;font-size:11.5px;line-height:14px;transform:scaleX(0.9390);">zwI8cmOWU9k</div><div class="t" style="left:508.00px;top:497.22px;font-size:11.5px;line-height:14px;transform:scaleX(0.9100);">GoPro &nbsp;Pelican Learns To Fish.mp4</div><svg class="abs" style="left:966px;top:494px" width="16" height="16"><path d="M2.4 2.4L14 14M14 2.4L2.4 14" stroke="#333" stroke-width="1.25" fill="none"/></svg>
<div class="t" style="left:769.50px;top:497.22px;font-size:11.5px;line-height:14px;transform:scaleX(0.9140);">73,557 KB</div><div class="t" style="left:830.10px;top:497.22px;font-size:11.5px;line-height:14px;transform:scaleX(0.9811);">Copying...</div><div class="th" style="top:497px"><svg width="128" height="72" viewBox="0 0 128 72">
<defs>
<linearGradient id="d0" x1="0" y1="0" x2="1" y2="0"><stop offset="0" stop-color="#e4eefa"/><stop offset=".2" stop-color="#a9ccf2"/><stop offset=".42" stop-color="#4d93e4"/><stop offset="1" stop-color="#5a86d2"/></linearGradient>
<filter id="df" x="-10%" y="-10%" width="120%" height="120%"><feGaussianBlur stdDeviation=".7"/></filter>
</defs>
<rect width="128" height="72" fill="url(#d0)"/>
<g filter="url(#df)">
<path d="M60.5 20L69 7L74.5 0H104L95 6L86 13L80 20Z" fill="#16181c"/>
<path d="M45 20C44 12 45.5 6.5 49.5 6.5C53.5 6.5 54.5 12 53.5 20Z" fill="#5e5e4e"/>
<path d="M47.5 20C47 14 48 10 49.5 10C51 10 51.5 14 51 20Z" fill="#7c7858"/>
<path d="M28 18.6L44 18.2V20H28Z" fill="#2a2a24"/>
<rect x="0" y="20" width="128" height="52" fill="#3a6aa8"/>
</g>
</svg></div><div class="q" style="left:258.5px;top:500px;width:47.5px"></div><div class="t" style="left:262.50px;top:500.04px;font-size:12px;line-height:14px;transform:scaleX(0.8422);color:#fff;">HD 1080</div>
<div id="status" class="abs"></div><div id="bot1" class="abs"></div><div id="bot2" class="abs"></div>
<div class="sep" style="left:549px;top:519px;height:16px;background:#cfcfcf"></div><div class="sep" style="left:797px;top:519px;height:16px;background:#cfcfcf"></div><div class="t" style="left:0.70px;top:520.02px;font-size:11.5px;line-height:14px;transform:scaleX(0.9323);">Ready</div><div class="t" style="left:553.80px;top:520.02px;font-size:11.5px;line-height:14px;transform:scaleX(0.9346);">5 downloads: 1 completed, 3 processing</div><div class="t" style="left:820.20px;top:520.02px;font-size:11.5px;line-height:14px;transform:scaleX(0.9319);">Speed: 3241.64 KB/s</div><svg class="abs" style="left:800px;top:517px" width="20" height="20"><path d="M9.8 3.6V14.5M4.6 10.2L9.8 15.4L15 10.2" fill="none" stroke="#12b812" stroke-width="2.8" stroke-linecap="round" stroke-linejoin="round"/></svg>
</body></html>
